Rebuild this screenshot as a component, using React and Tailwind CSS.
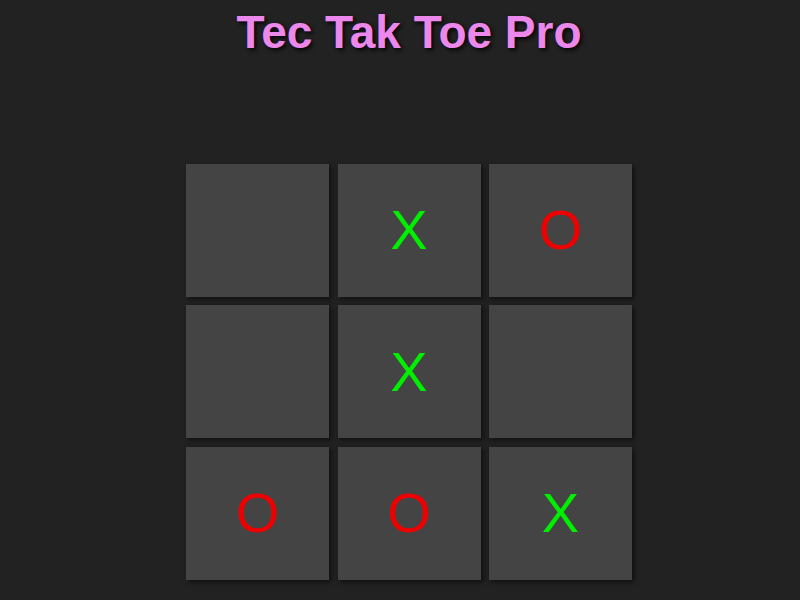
const board = ["", "X", "O", "", "X", "", "O", "O", "X"];

const Cell = ({ value }) => (
  <div className="flex h-[133px] w-[143px] items-center justify-center bg-[#444444] shadow-[2px_2px_5px_rgba(0,0,0,0.6)]">
    <span
      className={
        value === "X"
          ? "text-[56px] leading-none text-[#00ee00]"
          : "text-[56px] leading-none text-[#ee0000]"
      }
    >
      {value}
    </span>
  </div>
);

export default function App() {
  return (
    <div className="min-h-[600px] bg-[#222222] pl-[18px] font-['Liberation_Sans',Arial,sans-serif]">
      <div className="flex flex-col items-center">
        <h1 className="pt-[6px] text-[46px] leading-[1.15] font-bold text-[#ec88ec] [text-shadow:2px_2px_4px_rgba(0,0,0,0.9)]">
          Tec Tak Toe Pro
        </h1>
        <div className="mt-[105px] grid grid-cols-[143px_143px_143px] gap-[8.5px]">
          {board.map((v, i) => (
            <Cell key={i} value={v} />
          ))}
        </div>
      </div>
    </div>
  );
}
